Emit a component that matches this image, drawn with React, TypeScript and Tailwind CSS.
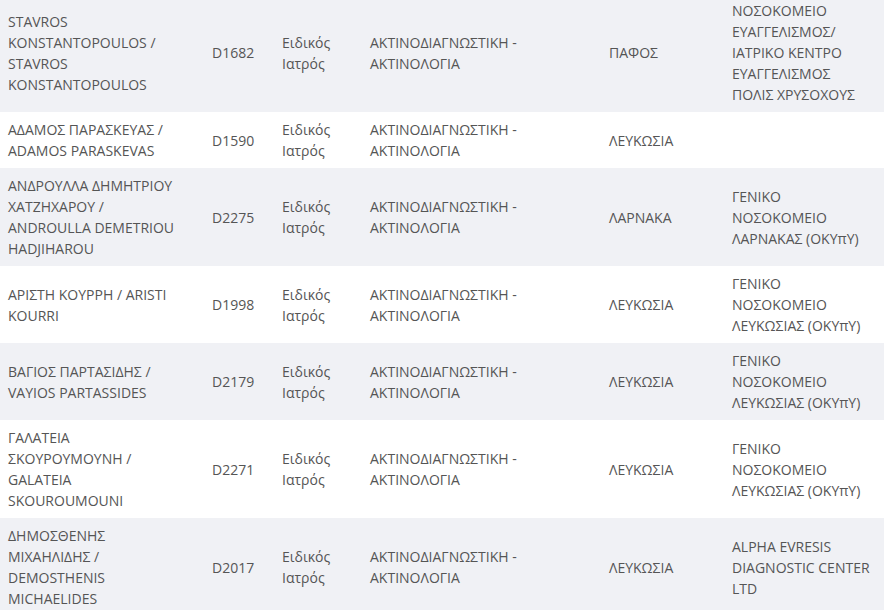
import React from "react";

type Row = { name: string; code: string; type: string; spec: string; city: string; place: string };

const rows: Row[] = [
  {
    name: "STAVROS KONSTANTOPOULOS / STAVROS KONSTANTOPOULOS",
    code: "D1682",
    type: "Ειδικός Ιατρός",
    spec: "ΑΚΤΙΝΟΔΙΑΓΝΩΣΤΙΚΗ - ΑΚΤΙΝΟΛΟΓΙΑ",
    city: "ΠΑΦΟΣ",
    place: "ΝΟΣΟΚΟΜΕΙΟ ΕΥΑΓΓΕΛΙΣΜΟΣ/ ΙΑΤΡΙΚΟ ΚΕΝΤΡΟ ΕΥΑΓΓΕΛΙΣΜΟΣ ΠΟΛΙΣ ΧΡΥΣΟΧΟΥΣ",
  },
  {
    name: "ΑΔΑΜΟΣ ΠΑΡΑΣΚΕΥΑΣ / ADAMOS PARASKEVAS",
    code: "D1590",
    type: "Ειδικός Ιατρός",
    spec: "ΑΚΤΙΝΟΔΙΑΓΝΩΣΤΙΚΗ - ΑΚΤΙΝΟΛΟΓΙΑ",
    city: "ΛΕΥΚΩΣΙΑ",
    place: "",
  },
  {
    name: "ΑΝΔΡΟΥΛΛΑ ΔΗΜΗΤΡΙΟΥ ΧΑΤΖΗΧΑΡΟΥ / ANDROULLA DEMETRIOU HADJIHAROU",
    code: "D2275",
    type: "Ειδικός Ιατρός",
    spec: "ΑΚΤΙΝΟΔΙΑΓΝΩΣΤΙΚΗ - ΑΚΤΙΝΟΛΟΓΙΑ",
    city: "ΛΑΡΝΑΚΑ",
    place: "ΓΕΝΙΚΟ ΝΟΣΟΚΟΜΕΙΟ ΛΑΡΝΑΚΑΣ (ΟΚΥπΥ)",
  },
  {
    name: "ΑΡΙΣΤΗ ΚΟΥΡΡΗ / ARISTI KOURRI",
    code: "D1998",
    type: "Ειδικός Ιατρός",
    spec: "ΑΚΤΙΝΟΔΙΑΓΝΩΣΤΙΚΗ - ΑΚΤΙΝΟΛΟΓΙΑ",
    city: "ΛΕΥΚΩΣΙΑ",
    place: "ΓΕΝΙΚΟ ΝΟΣΟΚΟΜΕΙΟ ΛΕΥΚΩΣΙΑΣ (ΟΚΥπΥ)",
  },
  {
    name: "ΒΑΓΙΟΣ ΠΑΡΤΑΣΙΔΗΣ / VAYIOS PARTASSIDES",
    code: "D2179",
    type: "Ειδικός Ιατρός",
    spec: "ΑΚΤΙΝΟΔΙΑΓΝΩΣΤΙΚΗ - ΑΚΤΙΝΟΛΟΓΙΑ",
    city: "ΛΕΥΚΩΣΙΑ",
    place: "ΓΕΝΙΚΟ ΝΟΣΟΚΟΜΕΙΟ ΛΕΥΚΩΣΙΑΣ (ΟΚΥπΥ)",
  },
  {
    name: "ΓΑΛΑΤΕΙΑ ΣΚΟΥΡΟΥΜΟΥΝΗ / GALATEIA SKOUROUMOUNI",
    code: "D2271",
    type: "Ειδικός Ιατρός",
    spec: "ΑΚΤΙΝΟΔΙΑΓΝΩΣΤΙΚΗ - ΑΚΤΙΝΟΛΟΓΙΑ",
    city: "ΛΕΥΚΩΣΙΑ",
    place: "ΓΕΝΙΚΟ ΝΟΣΟΚΟΜΕΙΟ ΛΕΥΚΩΣΙΑΣ (ΟΚΥπΥ)",
  },
  {
    name: "ΔΗΜΟΣΘΕΝΗΣ ΜΙΧΑΗΛΙΔΗΣ / DEMOSTHENIS MICHAELIDES",
    code: "D2017",
    type: "Ειδικός Ιατρός",
    spec: "ΑΚΤΙΝΟΔΙΑΓΝΩΣΤΙΚΗ - ΑΚΤΙΝΟΛΟΓΙΑ",
    city: "ΛΕΥΚΩΣΙΑ",
    place: "ALPHA EVRESIS DIAGNOSTIC CENTER LTD",
  },
];

export default function App() {
  return (
    <div className="w-[884px] h-[610px] overflow-hidden bg-white font-['Open_Sans',sans-serif] text-[14px] leading-[21px] text-[#555]">
      <table className="table-fixed border-collapse w-[884px] mt-[-7px]">
        <colgroup>
          <col className="w-[204px]" />
          <col className="w-[70px]" />
          <col className="w-[88px]" />
          <col className="w-[239px]" />
          <col className="w-[123px]" />
          <col className="w-[160px]" />
        </colgroup>
        <tbody>
          {rows.map((r, i) => (
            <tr key={i} className={i % 2 === 0 ? "bg-[#f0f1f5]" : "bg-white"}>
              <td className="pl-2 pr-[22px] py-[7px] align-middle">{r.name}</td>
              <td className="px-2 py-[7px] align-middle">{r.code}</td>
              <td className="px-2 py-[7px] align-middle">{r.type}</td>
              <td className="px-2 py-[7px] align-middle">{r.spec}</td>
              <td className="px-2 py-[7px] align-middle">{r.city}</td>
              <td className="pl-2 pr-[13px] py-[7px] align-middle">{r.place}</td>
            </tr>
          ))}
        </tbody>
      </table>
    </div>
  );
}
